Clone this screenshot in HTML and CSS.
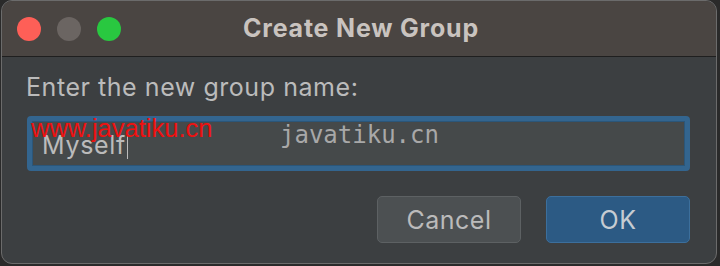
FILE: index.html
```html
<!DOCTYPE html>
<html lang="en">
<head>
    <meta charset="UTF-8">
    <meta name="viewport" content="width=device-width, initial-scale=1.0">
    <title>Create New Group</title>
    <link rel="stylesheet" href="styles.css">
</head>
<body>
    <div class="window">
        <div class="title-bar">
            <div class="lights">
                <span class="light close"></span>
                <span class="light minimize"></span>
                <span class="light zoom"></span>
            </div>
            <div class="title">Create New Group</div>
            <div></div>
        </div>

        <div class="content">
            <label class="prompt" for="groupName">Enter the new group name:</label>
            <div class="field">
                <span class="value" id="groupName">Myself</span><span class="caret"></span>
                <span class="mark-red">www.javatiku.cn</span>
                <span class="mark-mono">javatiku.cn</span>
            </div>
            <div class="actions">
                <button class="btn">Cancel</button>
                <button class="btn btn-primary">OK</button>
            </div>
        </div>
    </div>
</body>
</html>
```

FILE: styles.css
```css
:root {
    --title-bg: #4a4542;
    --content-bg: #3c3f41;
    --text-color: #bbbbbb;
    --focus-color: #33658f;
}
body {
    margin: 0;
    background-color: #2a2a2a;
    font-family: Inter, "Liberation Sans", sans-serif;
    color: var(--text-color);
}
.window {
    width: 716px;
    height: 264px;
    margin-left: 1px;
    box-sizing: border-box;
    border: 1px solid #6b6b6b;
    border-radius: 11px;
    overflow: hidden;
    display: flex;
    flex-direction: column;
    background-color: var(--content-bg);
}
.title-bar {
    height: 55px;
    flex-shrink: 0;
    background-color: var(--title-bg);
    border-bottom: 1px solid #1f1f1f;
    display: grid;
    grid-template-columns: 1fr auto 1fr;
    align-items: center;
}
.lights { display: flex; gap: 16px; padding-left: 15px; margin-top: 1px; }
.light { width: 24px; height: 24px; border-radius: 50%; }
.close { background-color: #fe5f57; }
.minimize { background-color: #6b6562; }
.zoom { background-color: #29c840; }
.title {
    font-size: 25px;
    font-weight: 700;
    letter-spacing: 0.8px;
    color: #c9c3bf;
    margin-left: 4px;
    margin-bottom: 2px;
}
.content {
    flex: 1;
    padding: 16px 26px 20px 23px;
    display: flex;
    flex-direction: column;
}
.prompt {
    font-size: 25px;
    line-height: 28px;
    letter-spacing: 0.55px;
    padding-left: 1px;
}
.field {
    position: relative;
    margin-top: 15px;
    margin-left: 2px;
    height: 55px;
    box-sizing: border-box;
    border: 5px solid var(--focus-color);
    border-radius: 4px;
    box-shadow: inset 0 0 0 1px #2b5679;
    background-color: #45494a;
    padding-left: 10px;
    display: flex;
    align-items: center;
    font-size: 25px;
    letter-spacing: 0.7px;
}
.value { margin-top: 2px; }
.caret {
    display: inline-block;
    width: 1px;
    height: 25px;
    margin-left: 1px;
    margin-top: 5px;
    background-color: #bbbbbb;
}
.mark-red {
    position: absolute;
    top: -5px;
    left: -1px;
    font-family: "Liberation Sans", Arial, sans-serif;
    font-size: 25.5px;
    line-height: 1;
    letter-spacing: 0;
    color: #ee1111;
}
.mark-mono {
    position: absolute;
    top: 2px;
    left: 248px;
    font-family: "DejaVu Sans Mono", monospace;
    font-size: 24px;
    line-height: 1;
    letter-spacing: 0;
    color: #a8a8a8;
}
.actions {
    margin-top: 25px;
    display: flex;
    justify-content: flex-end;
    gap: 25px;
}
.btn {
    width: 144px;
    height: 47px;
    border: 1px solid #5d6163;
    border-radius: 5px;
    background-color: #4c5052;
    color: var(--text-color);
    font-family: inherit;
    font-size: 25px;
    letter-spacing: 0.5px;
    cursor: pointer;
}
.btn-primary {
    background-color: #2c5a84;
    border-color: #3c6f9c;
    color: #c6ccd2;
}
```
